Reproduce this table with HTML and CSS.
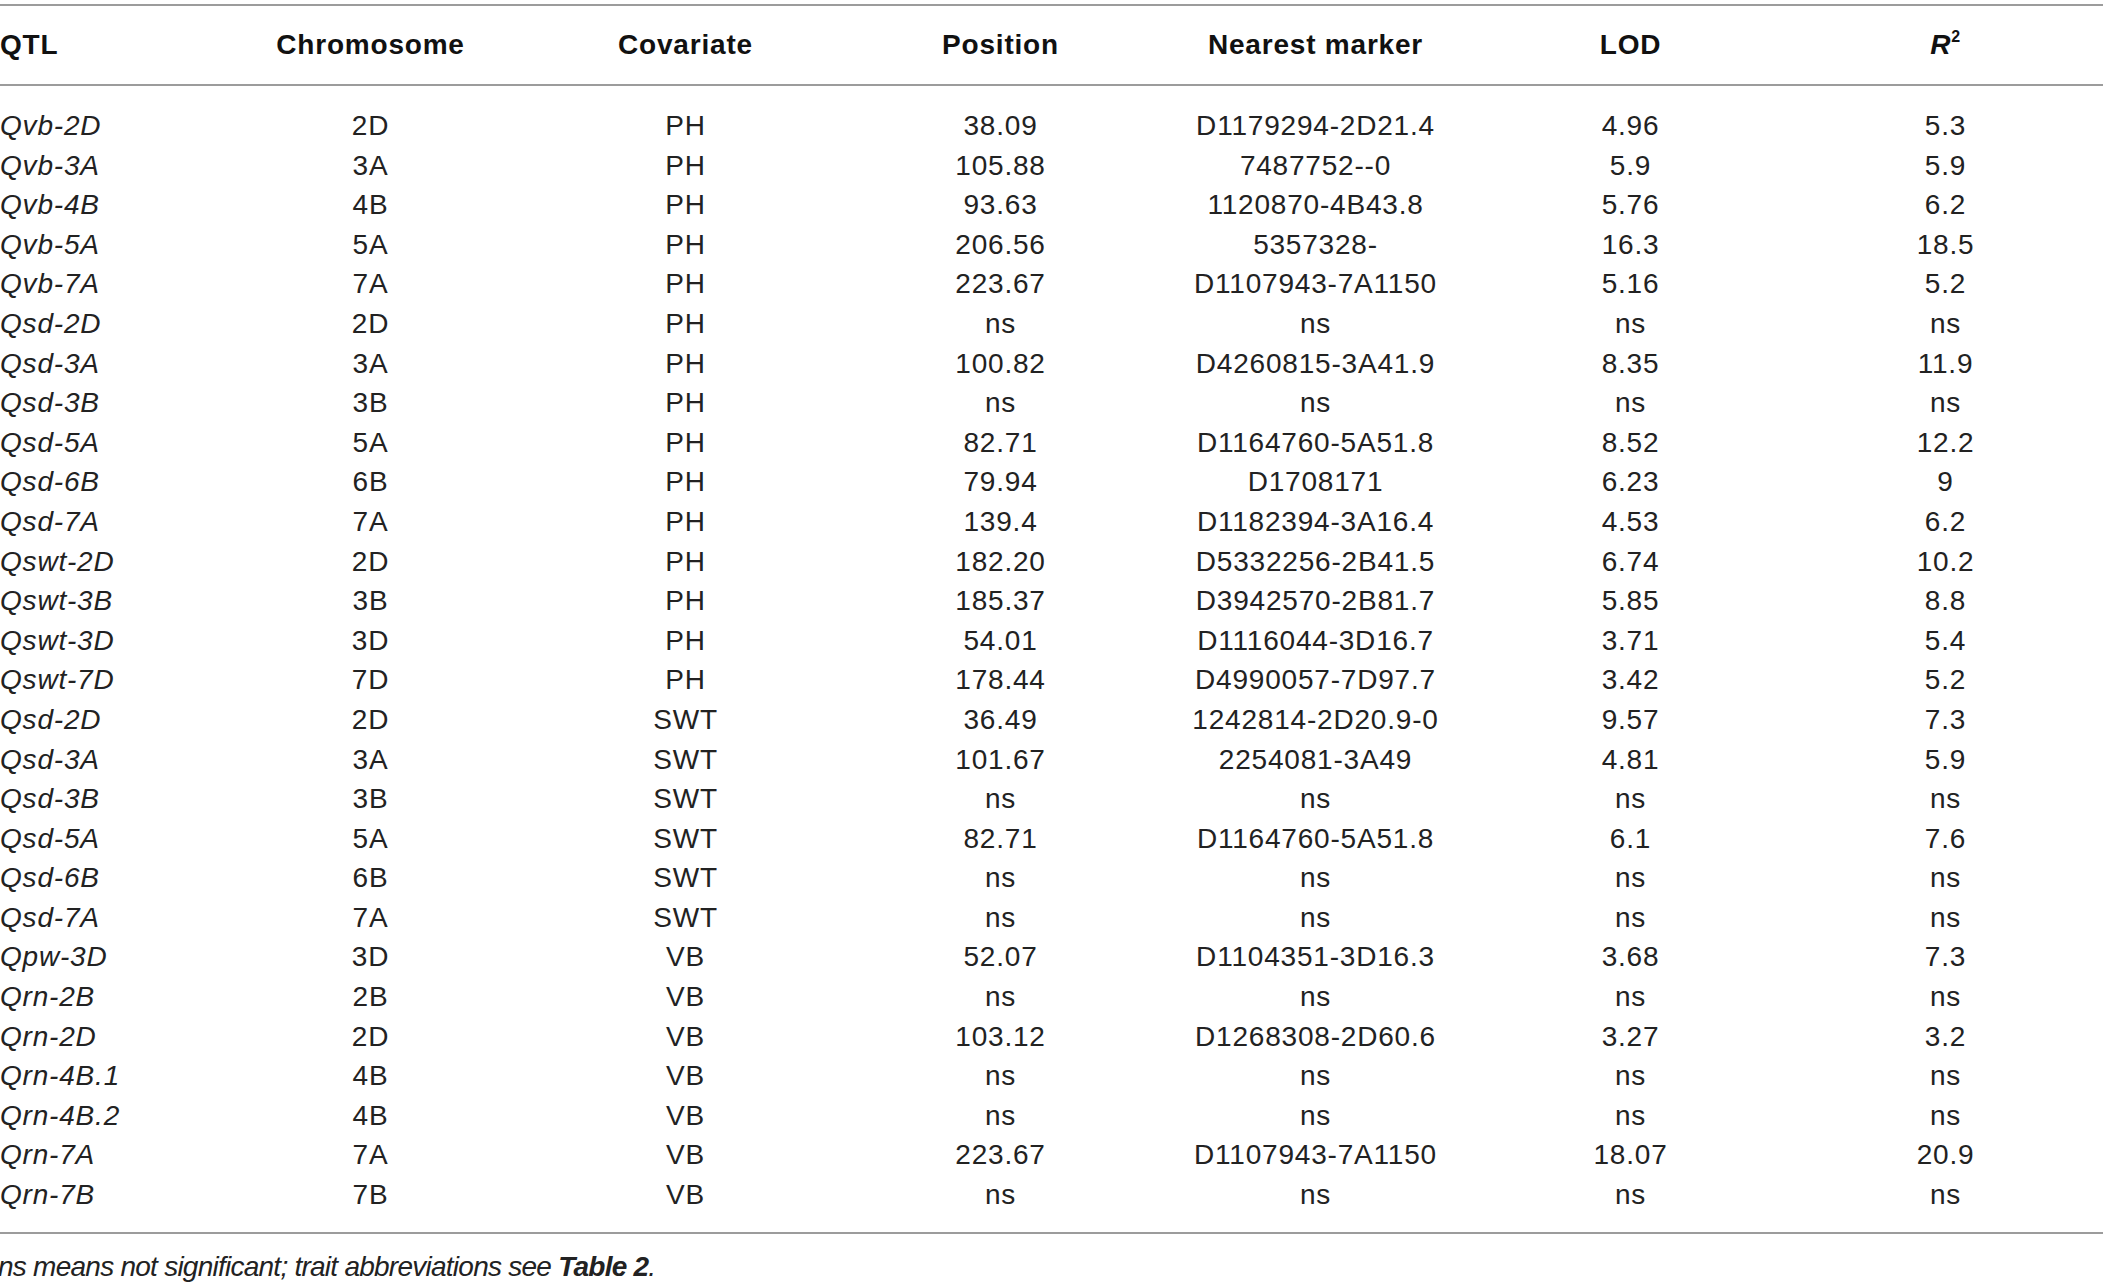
FILE: index.html
```html
<!DOCTYPE html>
<html lang="en">
<head>
    <meta charset="UTF-8">
    <title>QTL table</title>
    <link rel="stylesheet" href="styles.css">
</head>
<body>

<div class="table-wrap">
    <table class="qtl-table">
        <colgroup>
            <col class="col-qtl">
            <col class="col-data">
            <col class="col-data">
            <col class="col-data">
            <col class="col-data">
            <col class="col-data">
            <col class="col-data">
        </colgroup>
        <thead>
            <tr>
                <th>QTL</th>
                <th>Chromosome</th>
                <th>Covariate</th>
                <th>Position</th>
                <th>Nearest marker</th>
                <th>LOD</th>
                <th><i>R</i><sup>2</sup></th>
            </tr>
        </thead>
        <tbody>
            <tr><td>Qvb-2D</td><td>2D</td><td>PH</td><td>38.09</td><td>D1179294-2D21.4</td><td>4.96</td><td>5.3</td></tr>
            <tr><td>Qvb-3A</td><td>3A</td><td>PH</td><td>105.88</td><td>7487752--0</td><td>5.9</td><td>5.9</td></tr>
            <tr><td>Qvb-4B</td><td>4B</td><td>PH</td><td>93.63</td><td>1120870-4B43.8</td><td>5.76</td><td>6.2</td></tr>
            <tr><td>Qvb-5A</td><td>5A</td><td>PH</td><td>206.56</td><td>5357328-</td><td>16.3</td><td>18.5</td></tr>
            <tr><td>Qvb-7A</td><td>7A</td><td>PH</td><td>223.67</td><td>D1107943-7A1150</td><td>5.16</td><td>5.2</td></tr>
            <tr><td>Qsd-2D</td><td>2D</td><td>PH</td><td>ns</td><td>ns</td><td>ns</td><td>ns</td></tr>
            <tr><td>Qsd-3A</td><td>3A</td><td>PH</td><td>100.82</td><td>D4260815-3A41.9</td><td>8.35</td><td>11.9</td></tr>
            <tr><td>Qsd-3B</td><td>3B</td><td>PH</td><td>ns</td><td>ns</td><td>ns</td><td>ns</td></tr>
            <tr><td>Qsd-5A</td><td>5A</td><td>PH</td><td>82.71</td><td>D1164760-5A51.8</td><td>8.52</td><td>12.2</td></tr>
            <tr><td>Qsd-6B</td><td>6B</td><td>PH</td><td>79.94</td><td>D1708171</td><td>6.23</td><td>9</td></tr>
            <tr><td>Qsd-7A</td><td>7A</td><td>PH</td><td>139.4</td><td>D1182394-3A16.4</td><td>4.53</td><td>6.2</td></tr>
            <tr><td>Qswt-2D</td><td>2D</td><td>PH</td><td>182.20</td><td>D5332256-2B41.5</td><td>6.74</td><td>10.2</td></tr>
            <tr><td>Qswt-3B</td><td>3B</td><td>PH</td><td>185.37</td><td>D3942570-2B81.7</td><td>5.85</td><td>8.8</td></tr>
            <tr><td>Qswt-3D</td><td>3D</td><td>PH</td><td>54.01</td><td>D1116044-3D16.7</td><td>3.71</td><td>5.4</td></tr>
            <tr><td>Qswt-7D</td><td>7D</td><td>PH</td><td>178.44</td><td>D4990057-7D97.7</td><td>3.42</td><td>5.2</td></tr>
            <tr><td>Qsd-2D</td><td>2D</td><td>SWT</td><td>36.49</td><td>1242814-2D20.9-0</td><td>9.57</td><td>7.3</td></tr>
            <tr><td>Qsd-3A</td><td>3A</td><td>SWT</td><td>101.67</td><td>2254081-3A49</td><td>4.81</td><td>5.9</td></tr>
            <tr><td>Qsd-3B</td><td>3B</td><td>SWT</td><td>ns</td><td>ns</td><td>ns</td><td>ns</td></tr>
            <tr><td>Qsd-5A</td><td>5A</td><td>SWT</td><td>82.71</td><td>D1164760-5A51.8</td><td>6.1</td><td>7.6</td></tr>
            <tr><td>Qsd-6B</td><td>6B</td><td>SWT</td><td>ns</td><td>ns</td><td>ns</td><td>ns</td></tr>
            <tr><td>Qsd-7A</td><td>7A</td><td>SWT</td><td>ns</td><td>ns</td><td>ns</td><td>ns</td></tr>
            <tr><td>Qpw-3D</td><td>3D</td><td>VB</td><td>52.07</td><td>D1104351-3D16.3</td><td>3.68</td><td>7.3</td></tr>
            <tr><td>Qrn-2B</td><td>2B</td><td>VB</td><td>ns</td><td>ns</td><td>ns</td><td>ns</td></tr>
            <tr><td>Qrn-2D</td><td>2D</td><td>VB</td><td>103.12</td><td>D1268308-2D60.6</td><td>3.27</td><td>3.2</td></tr>
            <tr><td>Qrn-4B.1</td><td>4B</td><td>VB</td><td>ns</td><td>ns</td><td>ns</td><td>ns</td></tr>
            <tr><td>Qrn-4B.2</td><td>4B</td><td>VB</td><td>ns</td><td>ns</td><td>ns</td><td>ns</td></tr>
            <tr><td>Qrn-7A</td><td>7A</td><td>VB</td><td>223.67</td><td>D1107943-7A1150</td><td>18.07</td><td>20.9</td></tr>
            <tr><td>Qrn-7B</td><td>7B</td><td>VB</td><td>ns</td><td>ns</td><td>ns</td><td>ns</td></tr>
        </tbody>
    </table>

    <p class="table-note"><i>ns means not significant; trait abbreviations see <b>Table 2</b>.</i></p>
</div>

</body>
</html>
```

FILE: styles.css
```css
body {
    font-family: "Liberation Sans", Arial, sans-serif;
    margin: 0;
    padding: 0;
    background-color: #ffffff;
    color: #222222;
}
.table-wrap {
    width: 2103px;
    padding-top: 4px;
}
.qtl-table {
    width: 100%;
    border-collapse: collapse;
    table-layout: fixed;
    font-size: 28px;
    letter-spacing: 0.8px;
    border-top: 2px solid #9c9c9c;
    border-bottom: 2px solid #9c9c9c;
}
.col-qtl {
    width: 213px;
}
.col-data {
    width: 315px;
}
.qtl-table th {
    font-weight: bold;
    color: #111111;
    text-align: center;
    height: 78px;
    padding: 0;
    border-bottom: 2px solid #9c9c9c;
    vertical-align: middle;
}
.qtl-table th:first-child {
    text-align: left;
}
.qtl-table th sup {
    font-size: 16px;
    vertical-align: 12px;
    line-height: 0;
}
.qtl-table td {
    text-align: center;
    padding: 0;
    height: 39.6px;
    line-height: 39.6px;
}
.qtl-table td:first-child {
    text-align: left;
    font-style: italic;
}
/* space above the first and below the last body row */
.qtl-table tbody tr:first-child td {
    padding-top: 20px;
}
.qtl-table tbody tr:last-child td {
    padding-bottom: 17px;
}
.table-note {
    margin: 0;
    padding-top: 16px;
    font-size: 28px;
    line-height: 34px;
    letter-spacing: -0.75px;
    text-indent: -2px;
}
```
